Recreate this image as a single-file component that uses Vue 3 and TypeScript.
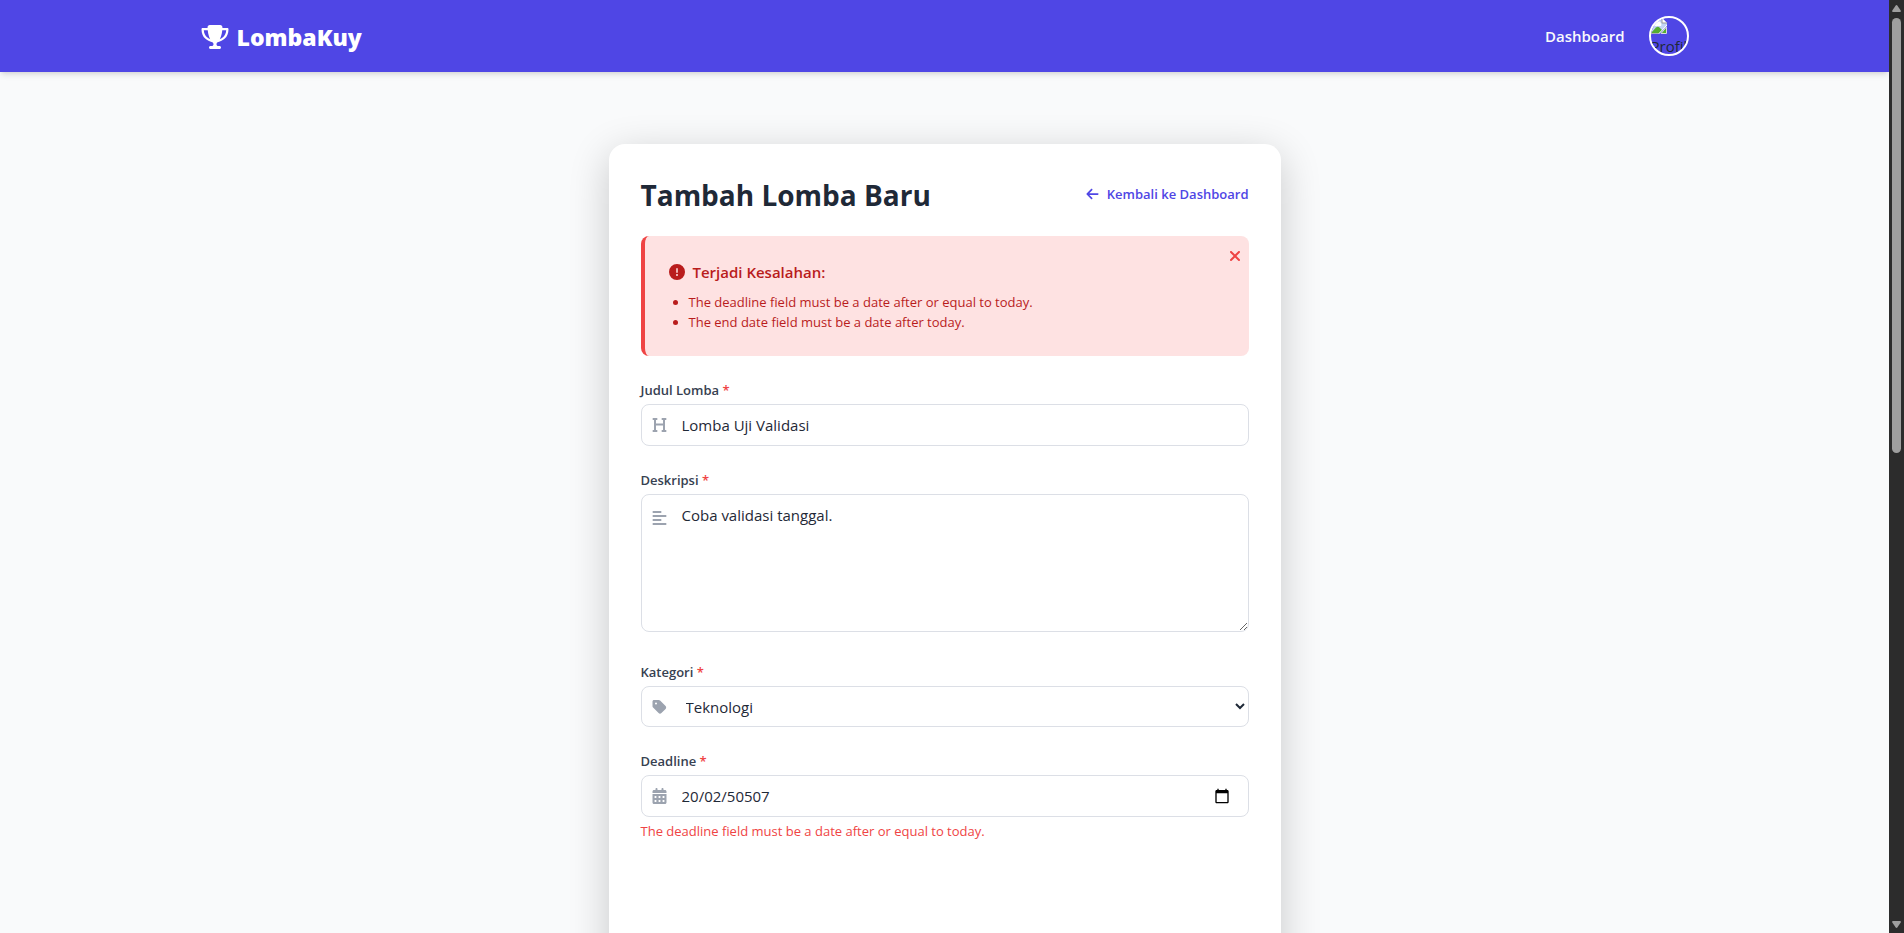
<script setup lang="ts">
import { ref } from 'vue'

const title = ref('Lomba Uji Validasi')
const description = ref('Coba validasi tanggal.')
const category = ref('Teknologi')
const deadline = ref('20/02/50507')
const showErrors = ref(true)

const categories: string[] = ['Teknologi', 'Seni', 'Olahraga', 'Akademik']
const errors: string[] = [
  'The deadline field must be a date after or equal to today.',
  'The end date field must be a date after today.',
]
</script>

<template>
  <div class="window">
    <div class="page">
      <header class="navbar">
        <div class="navbar-inner">
          <a class="brand" href="#">
            <svg class="brand-icon" viewBox="0 0 576 512" aria-hidden="true"><path d="M400 0H176c-26.5 0-48.1 21.8-47.1 48.2c.2 5.3 .4 10.6 .7 15.8H24C10.7 64 0 74.7 0 88c0 92.6 33.5 157 78.5 200.7c44.3 43.1 98.3 64.8 138.1 75.8c23.4 6.5 39.4 26 39.4 45.6c0 20.9-17 37.9-37.9 37.9H192c-17.7 0-32 14.3-32 32s14.3 32 32 32H384c17.7 0 32-14.3 32-32s-14.3-32-32-32H357.9C337 448 320 431 320 410.1c0-19.6 15.9-39.2 39.4-45.6c39.9-11 93.9-32.7 138.2-75.8C542.5 245 576 180.6 576 88c0-13.3-10.7-24-24-24H446.4c.3-5.2 .5-10.4 .7-15.8C448.1 21.8 426.5 0 400 0zM48.9 112h84.4c9.1 90.1 29.2 150.3 51.9 190.6c-24.9-11-50.8-26.5-73.2-48.3c-32-31.1-58-76-63-142.3zM464.1 254.3c-22.4 21.8-48.3 37.3-73.2 48.3c22.7-40.3 42.8-100.5 51.9-190.6h84.4c-5.1 66.3-31.1 111.2-63 142.3z" /></svg>
            <span>LombaKuy</span>
          </a>
          <nav class="nav-links">
            <a class="nav-link" href="#">Dashboard</a>
            <button class="avatar" type="button">
              <svg class="broken" viewBox="0 0 16 16" aria-hidden="true">
                <path d="M0 0H11L16 5V8L8 16H0Z" fill="#c3d4f5" />
                <path d="M2 7.500A2.500 2.500 0 0 1 5 4A3 3 0 0 1 10 5.500A2 2 0 0 1 10 8H3Z" fill="#fff" />
                <path d="M0 15L5 9.500Q7 8 9 10L11.500 12.500L8.500 15Z" fill="#55ad32" />
                <path d="M11 0V5H16" fill="#fff" stroke="#9a9a9a" />
                <path d="M15.500 9V15.500H10Z" fill="#55ad32" stroke="#d5d8dc" />
                <path d="M0 15.500H8M.5 15V0" fill="none" stroke="#a8adb5" />
                <path d="M16 7L8 15.500" stroke="#fff" />
              </svg>
              <span>Profil</span>
            </button>
          </nav>
        </div>
      </header>

      <main class="content">
        <section class="card">
          <div class="card-head">
            <h1>Tambah Lomba Baru</h1>
            <a class="back" href="#">
              <svg viewBox="0 0 448 512" aria-hidden="true"><path d="M9.400 233.400c-12.500 12.500-12.500 32.800 0 45.300l160 160c12.500 12.500 32.800 12.500 45.300 0s12.500-32.800 0-45.300L109.200 288 416 288c17.700 0 32-14.300 32-32s-14.300-32-32-32l-306.700 0L214.600 118.600c12.500-12.500 12.500-32.800 0-45.300s-32.800-12.500-45.300 0l-160 160z" /></svg>
              <span>Kembali ke Dashboard</span>
            </a>
          </div>

          <div v-if="showErrors" class="alert" role="alert">
            <div class="alert-title">
              <svg viewBox="0 0 512 512" aria-hidden="true"><path d="M256 512A256 256 0 1 0 256 0a256 256 0 1 0 0 512zm0-384c13.300 0 24 10.700 24 24V264c0 13.300-10.700 24-24 24s-24-10.700-24-24V152c0-13.300 10.700-24 24-24zM224 352a32 32 0 1 1 64 0 32 32 0 1 1 -64 0z" /></svg>
              <strong>Terjadi Kesalahan:</strong>
            </div>
            <ul>
              <li v-for="message in errors" :key="message">{{ message }}</li>
            </ul>
            <button class="close" type="button" aria-label="Tutup" @click="showErrors = false">
              <svg viewBox="0 0 384 512" aria-hidden="true"><path d="M342.600 150.600c12.500-12.500 12.500-32.800 0-45.300s-32.800-12.500-45.300 0L192 210.700 86.600 105.400c-12.500-12.500-32.800-12.500-45.300 0s-12.500 32.800 0 45.300L146.700 256 41.400 361.400c-12.500 12.500-12.500 32.800 0 45.300s32.800 12.500 45.300 0L192 301.300 297.400 406.600c12.500 12.500 32.800 12.500 45.300 0s12.500-32.800 0-45.300L237.300 256 342.600 150.600z" /></svg>
            </button>
          </div>

          <form class="form" @submit.prevent>
            <div class="field">
              <label for="title">Judul Lomba <span class="required">*</span></label>
              <div class="control">
                <svg class="icon" viewBox="0 0 448 512" aria-hidden="true"><path d="M0 64C0 46.300 14.300 32 32 32H80h48c17.700 0 32 14.300 32 32s-14.300 32-32 32H112V208H336V96H320c-17.700 0-32-14.300-32-32s14.300-32 32-32h48 48c17.700 0 32 14.300 32 32s-14.300 32-32 32H400V240 416h16c17.700 0 32 14.300 32 32s-14.300 32-32 32H368 320c-17.700 0-32-14.300-32-32s14.300-32 32-32h16V272H112V416h16c17.700 0 32 14.300 32 32s-14.300 32-32 32H80 32c-17.700 0-32-14.300-32-32s14.300-32 32-32H48V240 96H32C14.300 96 0 81.700 0 64z" /></svg>
                <input id="title" v-model="title" type="text" />
              </div>
            </div>

            <div class="field field-area">
              <label for="description">Deskripsi <span class="required">*</span></label>
              <div class="control control-area">
                <svg class="icon" viewBox="0 0 448 512" aria-hidden="true"><path d="M288 64c0 17.700-14.300 32-32 32H32C14.300 96 0 81.700 0 64S14.300 32 32 32H256c17.700 0 32 14.300 32 32zm0 256c0 17.700-14.300 32-32 32H32c-17.700 0-32-14.300-32-32s14.300-32 32-32H256c17.700 0 32 14.300 32 32zM0 192c0-17.700 14.300-32 32-32H416c17.700 0 32 14.300 32 32s-14.300 32-32 32H32c-17.700 0-32-14.300-32-32zM448 448c0 17.700-14.300 32-32 32H32c-17.700 0-32-14.300-32-32s14.300-32 32-32H416c17.700 0 32 14.300 32 32z" /></svg>
                <textarea id="description" v-model="description" rows="5"></textarea>
              </div>
            </div>

            <div class="field">
              <label for="category">Kategori <span class="required">*</span></label>
              <div class="control">
                <svg class="icon" viewBox="0 0 448 512" aria-hidden="true"><path d="M0 80V229.500c0 17 6.700 33.300 18.700 45.300l176 176c25 25 65.500 25 90.500 0L418.700 317.300c25-25 25-65.500 0-90.500l-176-176c-12-12-28.300-18.700-45.300-18.700H48C21.500 32 0 53.500 0 80zm112 32a32 32 0 1 1 0 64 32 32 0 1 1 0-64z" /></svg>
                <select id="category" v-model="category">
                  <option v-for="name in categories" :key="name" :value="name">{{ name }}</option>
                </select>
              </div>
            </div>

            <div class="field">
              <label for="deadline">Deadline <span class="required">*</span></label>
              <div class="control">
                <svg class="icon" viewBox="0 0 448 512" aria-hidden="true"><path d="M128 0c17.700 0 32 14.300 32 32V64H288V32c0-17.700 14.300-32 32-32s32 14.300 32 32V64h48c26.500 0 48 21.500 48 48v48H0V112C0 85.500 21.500 64 48 64H96V32c0-17.700 14.300-32 32-32zM0 192H448V464c0 26.500-21.500 48-48 48H48c-26.500 0-48-21.500-48-48V192zm64 80v32c0 8.800 7.200 16 16 16h32c8.800 0 16-7.200 16-16V272c0-8.800-7.200-16-16-16H80c-8.800 0-16 7.200-16 16zm128 0v32c0 8.800 7.200 16 16 16h32c8.800 0 16-7.200 16-16V272c0-8.800-7.200-16-16-16H208c-8.800 0-16 7.200-16 16zm144-16c-8.800 0-16 7.200-16 16v32c0 8.800 7.200 16 16 16h32c8.800 0 16-7.200 16-16V272c0-8.800-7.200-16-16-16H336zM64 400v32c0 8.800 7.200 16 16 16h32c8.800 0 16-7.200 16-16V400c0-8.800-7.200-16-16-16H80c-8.800 0-16 7.200-16 16zm144-16c-8.800 0-16 7.200-16 16v32c0 8.800 7.200 16 16 16h32c8.800 0 16-7.200 16-16V400c0-8.800-7.200-16-16-16H208zm112 16v32c0 8.800 7.200 16 16 16h32c8.800 0 16-7.200 16-16V400c0-8.800-7.200-16-16-16H336c-8.800 0-16 7.200-16 16z" /></svg>
                <input id="deadline" v-model="deadline" type="text" aria-describedby="deadline-error" />
                <button class="picker" type="button" aria-label="Pilih tanggal">
                  <svg viewBox="0 0 24 24" aria-hidden="true"><path d="M20 3h-1V1h-2v2H7V1H5v2H4c-1.100 0-2 .9-2 2v16c0 1.100.9 2 2 2h16c1.100 0 2-.9 2-2V5c0-1.100-.9-2-2-2zm0 18H4V8h16v13z" /></svg>
                </button>
              </div>
              <p id="deadline-error" class="error">{{ errors[0] }}</p>
            </div>
          </form>
        </section>
      </main>
    </div>

    <div class="scrollbar" aria-hidden="true">
      <svg class="arrow" viewBox="0 0 9 7"><path d="M3.500 .8Q4.500-.6 5.500 .8L8.700 5.500Q9.300 7 8 7H1Q-.3 7 .3 5.500Z" /></svg>
      <div class="track"><div class="thumb"></div></div>
      <svg class="arrow" viewBox="0 0 9 7"><path d="M3.500 6.200Q4.500 7.600 5.500 6.200L8.700 1.500Q9.300 0 8 0H1Q-.3 0 .3 1.500Z" /></svg>
    </div>
  </div>
</template>

<style>
body {
  margin: 0;
  overflow: hidden;
}
</style>

<style scoped>
*,
*::before,
*::after {
  box-sizing: border-box;
}

.window {
  display: grid;
  grid-template-columns: minmax(0, 1fr) 15px;
  height: 100vh;
  overflow: hidden;
  color: #1f2937;
  font-family: 'Open Sans', 'Noto Sans', sans-serif;
  font-size: 15px;
  line-height: 24px;
}

svg {
  display: block;
  fill: currentColor;
}

a {
  text-decoration: none;
}

button {
  padding: 0;
  border: 0;
  background: none;
  font: inherit;
  cursor: pointer;
}

.page {
  overflow: hidden;
  background: #f9fafb;
}

.navbar {
  background: #4f46e5;
  box-shadow: 0 4px 6px -1px rgba(0, 0, 0, 0.1), 0 2px 4px -2px rgba(0, 0, 0, 0.1);
}

.navbar-inner {
  display: flex;
  align-items: center;
  justify-content: space-between;
  max-width: 1536px;
  margin: 0 auto;
  padding: 16px 24px;
}

.brand {
  display: flex;
  align-items: center;
  gap: 8px;
  padding-top: 2px;
  color: #fff;
  font-size: 23px;
  font-weight: 800;
  line-height: 32px;
}

.brand-icon {
  width: 28px;
  height: 24px;
}

.nav-links {
  display: flex;
  align-items: center;
  gap: 24px;
}

.nav-link {
  color: #f9fafb;
  font-weight: 600;
}

.avatar {
  width: 40px;
  height: 40px;
  overflow: hidden;
  border: 2px solid #fff;
  border-radius: 50%;
  color: #1f2937;
  text-align: left;
}

.avatar .broken {
  width: 16px;
  height: 16px;
}

.avatar span {
  display: block;
}

.content {
  display: flex;
  justify-content: center;
  padding: 72px 24px 0;
}

.card {
  width: 100%;
  max-width: 672px;
  min-height: 100vh;
  padding: 32px;
  border-radius: 16px;
  background: #fff;
  box-shadow: 0 10px 40px rgba(0, 0, 0, 0.2);
}

.card-head {
  display: flex;
  align-items: center;
  justify-content: space-between;
  margin-bottom: 24px;
}

h1 {
  margin: 0;
  padding-top: 2px;
  font-size: 28px;
  font-weight: 700;
  line-height: 34px;
}

.back {
  display: flex;
  align-items: center;
  gap: 8px;
  color: #4f46e5;
  font-size: 13px;
  font-weight: 600;
  line-height: 20px;
}

.back svg {
  width: 13px;
  height: 14px;
}

.alert {
  position: relative;
  margin-bottom: 24px;
  padding: 24px;
  border-left: 4px solid #ef4444;
  border-radius: 8px;
  background: #fee2e2;
  color: #b91c1c;
}

.alert-title {
  display: flex;
  align-items: center;
  gap: 8px;
  margin-bottom: 8px;
}

.alert-title svg {
  width: 16px;
  height: 16px;
}

.alert-title strong {
  font-weight: 600;
}

.alert ul {
  margin: 0;
  padding-left: 20px;
  font-size: 13px;
  line-height: 20px;
}

.close {
  position: absolute;
  top: 8px;
  right: 8px;
  display: grid;
  place-items: center;
  width: 12px;
  height: 24px;
  color: #ef4444;
}

.close svg {
  width: 12px;
  height: 18px;
}

.form {
  display: flex;
  flex-direction: column;
  gap: 24px;
}

.field {
  display: flex;
  flex-direction: column;
  gap: 4px;
}

.field-area {
  padding-bottom: 6px;
}

label {
  color: #374151;
  font-size: 13px;
  font-weight: 600;
  line-height: 20px;
}

.required {
  color: #ef4444;
}

.control {
  position: relative;
  display: flex;
  align-items: center;
}

.control-area {
  align-items: flex-start;
}

.icon {
  position: absolute;
  left: 11px;
  width: 15px;
  height: 16px;
  color: #9ca3af;
  pointer-events: none;
}

.control-area .icon {
  top: 16px;
}

input,
textarea,
select {
  width: 100%;
  margin: 0;
  padding: 8px 16px 8px 40px;
  border: 1px solid #dcdfe6;
  border-radius: 8px;
  background: #fff;
  color: #1f2937;
  font: inherit;
}

input {
  height: 42px;
}

select {
  height: 41px;
  padding-right: 0;
}

textarea {
  display: block;
  resize: vertical;
}

.picker {
  position: absolute;
  right: 19px;
  color: #000;
}

.picker svg {
  width: 16px;
  height: 16px;
}

.error {
  margin: 0;
  color: #ef4444;
  font-size: 13px;
  line-height: 20px;
}

.scrollbar {
  display: flex;
  flex-direction: column;
  align-items: center;
  gap: 6px;
  padding: 5px 0;
  background: #2c2c2c;
  color: #9f9f9f;
}

.arrow {
  width: 9px;
  height: 7px;
}

.track {
  flex: 1;
  width: 9px;
}

.thumb {
  height: calc(48% + 4px);
  border-radius: 5px;
  background: #9f9f9f;
}
</style>
